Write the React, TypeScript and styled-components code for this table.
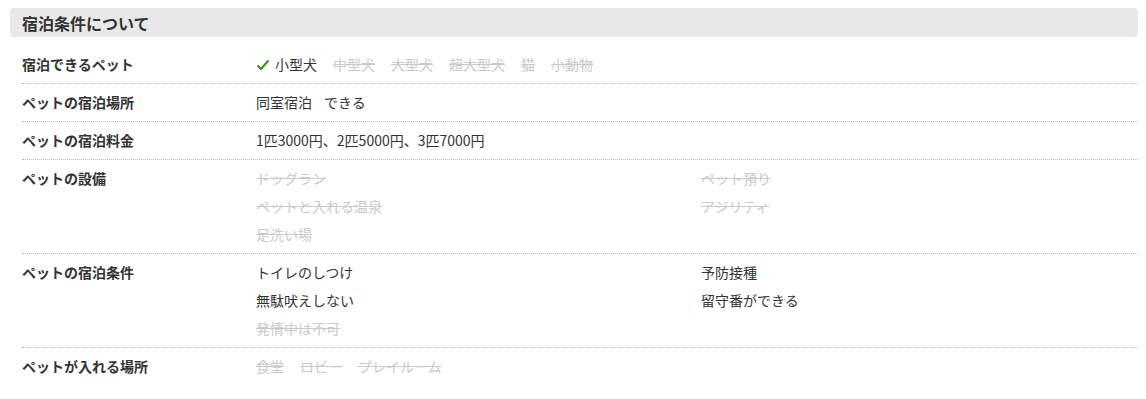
import styled, { createGlobalStyle } from "styled-components";

const GlobalStyle = createGlobalStyle`
  body {
    margin: 0;
    background: #fff;
    font-family: "Noto Sans CJK JP", "Noto Sans", sans-serif;
    color: #333;
  }
`;

const Section = styled.section`
  padding: 8px 8px 20px 10px;
`;

const Heading = styled.h2`
  margin: 0 0 9px;
  height: 29px;
  display: flex;
  align-items: center;
  padding: 0 12px;
  background: #e8e8e8;
  border-radius: 4px;
  font-size: 16px;
  font-weight: 700;
  color: #333;
`;

const Table = styled.dl`
  margin: 0 0 0 12px;
`;

const Row = styled.div<{ $last?: boolean }>`
  display: grid;
  grid-template-columns: 234px 1fr;
  padding: 9px 0;
  border-bottom: ${(p) => (p.$last ? "none" : "1px dotted #b5b5b5")};
`;

const Label = styled.dt`
  margin: 0;
  font-size: 14px;
  line-height: 19px;
  font-weight: 700;
  color: #333;
`;

const Value = styled.dd`
  margin: 0;
  font-size: 14px;
  line-height: 19px;
`;

const Inline = styled.div<{ $gap: number }>`
  display: flex;
  align-items: center;
  height: 19px;
  gap: ${(p) => p.$gap}px;
`;

const Columns = styled.div`
  display: grid;
  grid-template-columns: 445px 1fr;
  grid-auto-rows: 19px;
  row-gap: 9px;
`;

const Item = styled.span<{ $off?: boolean }>`
  display: inline-flex;
  align-items: center;
  height: 19px;
  gap: 5px;
  color: ${(p) => (p.$off ? "#c9c9c9" : "#333")};
  text-decoration: ${(p) => (p.$off ? "line-through" : "none")};
`;

const Check = () => (
  <svg width="14" height="12" viewBox="0 0 14 12">
    <polyline
      points="1.5,6.5 5,10 12.5,1.5"
      fill="none"
      stroke="#4b8a2a"
      strokeWidth="2.2"
    />
  </svg>
);

type Entry = { text: string; off?: boolean };

const pets: Entry[] = [
  { text: "中型犬", off: true },
  { text: "大型犬", off: true },
  { text: "超大型犬", off: true },
  { text: "猫", off: true },
  { text: "小動物", off: true },
];

const facilities: Entry[] = [
  { text: "ドッグラン", off: true },
  { text: "ペット預り", off: true },
  { text: "ペットと入れる温泉", off: true },
  { text: "アジリティ", off: true },
  { text: "足洗い場", off: true },
];

const conditions: Entry[] = [
  { text: "トイレのしつけ" },
  { text: "予防接種" },
  { text: "無駄吠えしない" },
  { text: "留守番ができる" },
  { text: "発情中は不可", off: true },
];

const places: Entry[] = [
  { text: "食堂", off: true },
  { text: "ロビー", off: true },
  { text: "プレイルーム", off: true },
];

const renderColumns = (list: Entry[]) => (
  <Columns>
    {list.map((e) => (
      <div key={e.text}>
        <Item $off={e.off}>{e.text}</Item>
      </div>
    ))}
  </Columns>
);

export default function App() {
  return (
    <>
      <GlobalStyle />
      <Section>
        <Heading>宿泊条件について</Heading>
        <Table>
          <Row>
            <Label>宿泊できるペット</Label>
            <Value>
              <Inline $gap={16}>
                <Item>
                  <Check />
                  小型犬
                </Item>
                {pets.map((e) => (
                  <Item key={e.text} $off={e.off}>
                    {e.text}
                  </Item>
                ))}
              </Inline>
            </Value>
          </Row>
          <Row>
            <Label>ペットの宿泊場所</Label>
            <Value>
              <Inline $gap={12}>
                <Item>同室宿泊</Item>
                <Item>できる</Item>
              </Inline>
            </Value>
          </Row>
          <Row>
            <Label>ペットの宿泊料金</Label>
            <Value>1匹3000円、2匹5000円、3匹7000円</Value>
          </Row>
          <Row>
            <Label>ペットの設備</Label>
            <Value>{renderColumns(facilities)}</Value>
          </Row>
          <Row>
            <Label>ペットの宿泊条件</Label>
            <Value>{renderColumns(conditions)}</Value>
          </Row>
          <Row $last>
            <Label>ペットが入れる場所</Label>
            <Value>
              <Inline $gap={16}>
                {places.map((e) => (
                  <Item key={e.text} $off={e.off}>
                    {e.text}
                  </Item>
                ))}
              </Inline>
            </Value>
          </Row>
        </Table>
      </Section>
    </>
  );
}
